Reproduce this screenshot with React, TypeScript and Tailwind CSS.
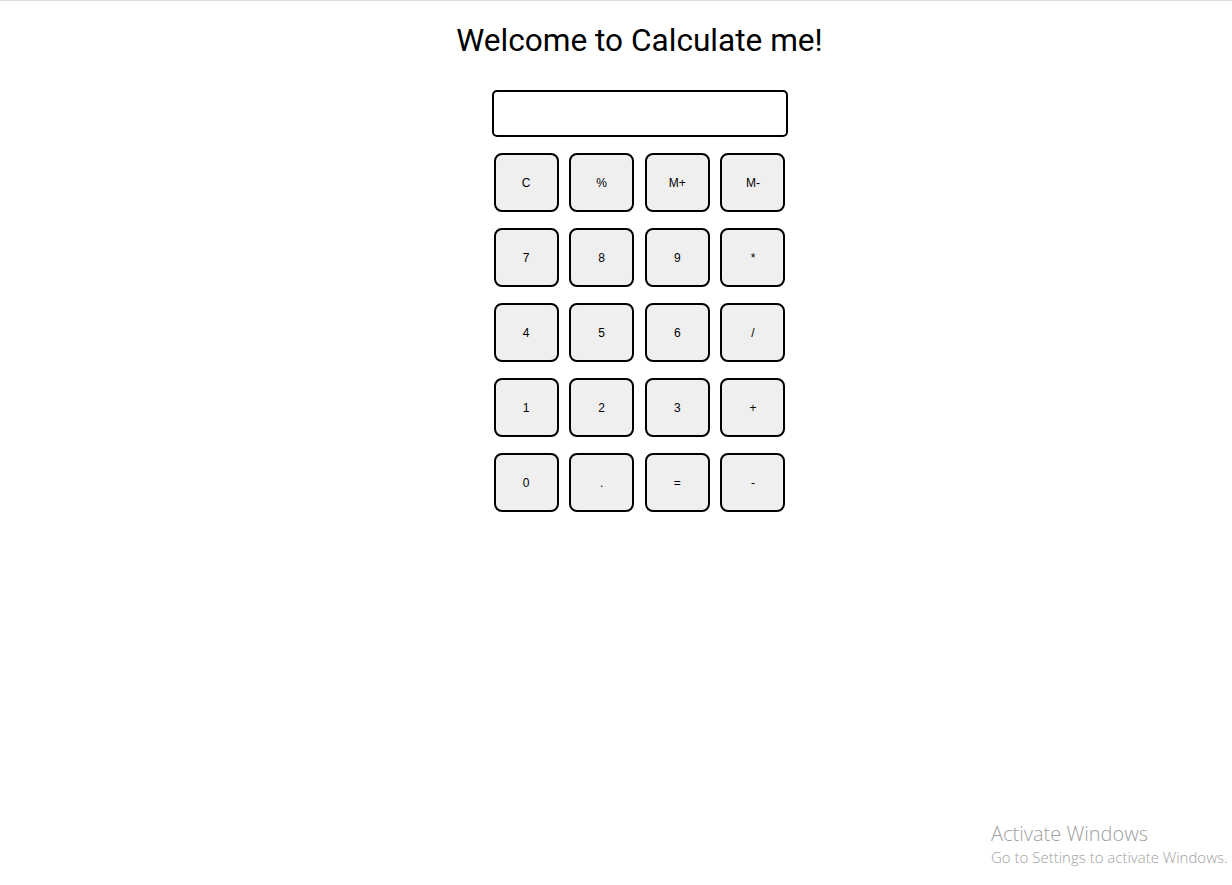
import React, { useState } from "react";

const keys = [
    ["C", "%", "M+", "M-"],
    ["7", "8", "9", "*"],
    ["4", "5", "6", "/"],
    ["1", "2", "3", "+"],
    ["0", ".", "=", "-"],
];

function App() {
    // display value
    const [display, setDisplay] = useState("");

    function press(key: string) {
        if (key === "C") {
            setDisplay("");
        } else if (key === "=") {
            try {
                // eslint-disable-next-line no-new-func
                setDisplay(String(Function("return (" + display + ")")()));
            } catch {
                setDisplay("Error");
            }
        } else if (key === "M+" || key === "M-" || key === "%") {
            return;
        } else {
            setDisplay(display + key);
        }
    }

    return (
        <div className="relative min-h-[885px] border-t border-[#dcdcdc] bg-white font-['Liberation_Sans',Arial,sans-serif]">
            <div className="flex flex-col items-center pl-[47px]">
                <h1 className="mt-[21px] font-['Roboto',sans-serif] text-[31.6px] leading-[37px] text-black">
                    Welcome to Calculate me!
                </h1>
                <input
                    value={display}
                    readOnly
                    className="mt-[31px] h-[47px] w-[296px] rounded-[5px] border-2 border-black bg-white px-2 text-lg outline-none"
                />
                <div className="mt-[16px] flex w-[292px] flex-col gap-[16px]">
                    {keys.map((row, i) => (
                        <div key={i} className="flex justify-between">
                            {row.map((key) => (
                                <button
                                    key={key}
                                    onClick={() => press(key)}
                                    className="h-[59px] w-[65px] rounded-[8px] border-2 border-black bg-[#efefef] text-[12px] text-black"
                                >
                                    {key}
                                </button>
                            ))}
                        </div>
                    ))}
                </div>
            </div>
            <div className="absolute left-[991px] top-[820px] font-['Open_Sans',sans-serif] font-light text-[#a0a0a0]">
                <div className="text-[20px] leading-[26px]">Activate Windows</div>
                <div className="text-[15px] leading-[20px]">Go to Settings to activate Windows.</div>
            </div>
        </div>
    );
}

export default App;
